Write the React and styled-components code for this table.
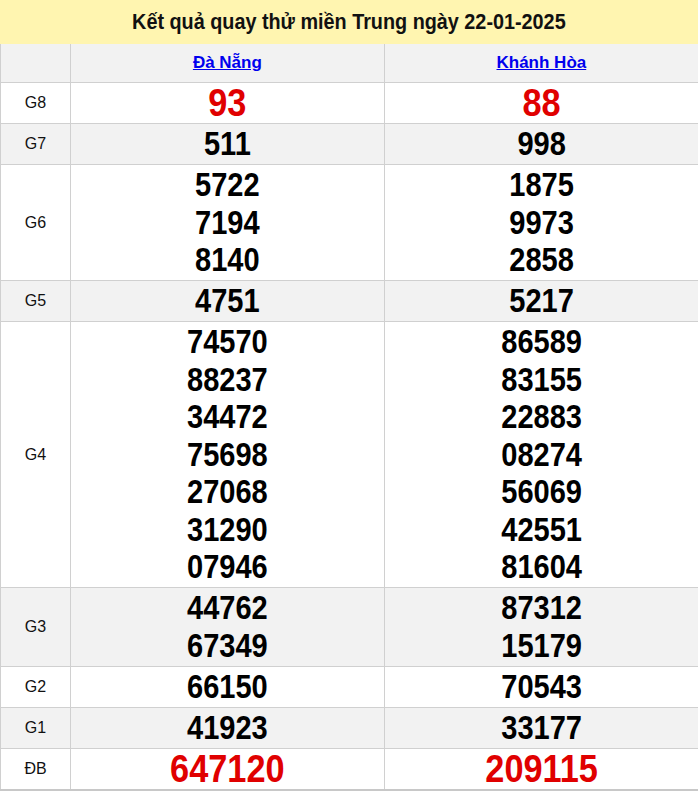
import React from 'react'
import styled, { createGlobalStyle } from 'styled-components'

const GlobalStyle = createGlobalStyle`
  html, body {
    margin: 0;
    padding: 0;
    background: #fff;
    overflow: hidden;
  }
  body {
    font-family: "Liberation Sans", Arial, sans-serif;
  }
`

const Wrapper = styled.div`
  width: 698px;
`

const Title = styled.h2`
  margin: 0;
  height: 44px;
  line-height: 44px;
  background: #fff5b0;
  text-align: center;
  font-size: 22px;
  font-weight: bold;
  color: #111;

  span {
    display: inline-block;
    transform: scaleX(0.9);
  }
`

const Table = styled.table`
  width: 100%;
  border-collapse: collapse;
  table-layout: fixed;
  border-bottom: 2px solid #c8c8c8;

  th:last-child,
  td:last-child {
    border-right: none;
  }
`

const Row = styled.tr`
  background: ${(p) => (p.$shaded ? '#f2f2f2' : '#fff')};
`

const HeadCell = styled.th`
  border: 1px solid #d0d0d0;
  border-top: none;
  height: 38px;
  padding: 0;
  font-size: 17px;
  font-weight: bold;
  text-align: center;

  a {
    color: #0000ee;
    text-decoration: underline;
  }
`

const LabelCell = styled.td`
  width: 69px;
  border: 1px solid #d0d0d0;
  text-align: center;
  font-size: 16px;
  color: #111;
  padding: 0;
`

const NumCell = styled.td`
  border: 1px solid #d0d0d0;
  text-align: center;
  padding: 1px 0 1.5px;
  vertical-align: middle;
`

const Num = styled.div`
  line-height: 37.5px;
  font-weight: bold;
  font-size: ${(p) => (p.$red ? '39px' : '33px')};
  color: ${(p) => (p.$red ? '#e00000' : '#000')};
  transform: scaleX(0.88);
`

const prizes = [
  { label: 'G8', red: true, a: ['93'], b: ['88'] },
  { label: 'G7', a: ['511'], b: ['998'] },
  { label: 'G6', a: ['5722', '7194', '8140'], b: ['1875', '9973', '2858'] },
  { label: 'G5', a: ['4751'], b: ['5217'] },
  {
    label: 'G4',
    a: ['74570', '88237', '34472', '75698', '27068', '31290', '07946'],
    b: ['86589', '83155', '22883', '08274', '56069', '42551', '81604']
  },
  { label: 'G3', a: ['44762', '67349'], b: ['87312', '15179'] },
  { label: 'G2', a: ['66150'], b: ['70543'] },
  { label: 'G1', a: ['41923'], b: ['33177'] },
  { label: 'ĐB', red: true, a: ['647120'], b: ['209115'] }
]

const App = () => (
  <Wrapper>
    <GlobalStyle />
    <Title>
      <span>Kết quả quay thử miền Trung ngày 22-01-2025</span>
    </Title>
    <Table>
      <colgroup>
        <col style={{ width: 70 }} />
        <col />
        <col />
      </colgroup>
      <thead>
        <Row $shaded>
          <HeadCell />
          <HeadCell>
            <a href="#">Đà Nẵng</a>
          </HeadCell>
          <HeadCell>
            <a href="#">Khánh Hòa</a>
          </HeadCell>
        </Row>
      </thead>
      <tbody>
        {prizes.map((p, i) => (
          <Row key={p.label} $shaded={i % 2 === 1}>
            <LabelCell>{p.label}</LabelCell>
            <NumCell>
              {p.a.map((n) => (
                <Num key={n} $red={p.red}>{n}</Num>
              ))}
            </NumCell>
            <NumCell>
              {p.b.map((n) => (
                <Num key={n} $red={p.red}>{n}</Num>
              ))}
            </NumCell>
          </Row>
        ))}
      </tbody>
    </Table>
  </Wrapper>
)

export default App
